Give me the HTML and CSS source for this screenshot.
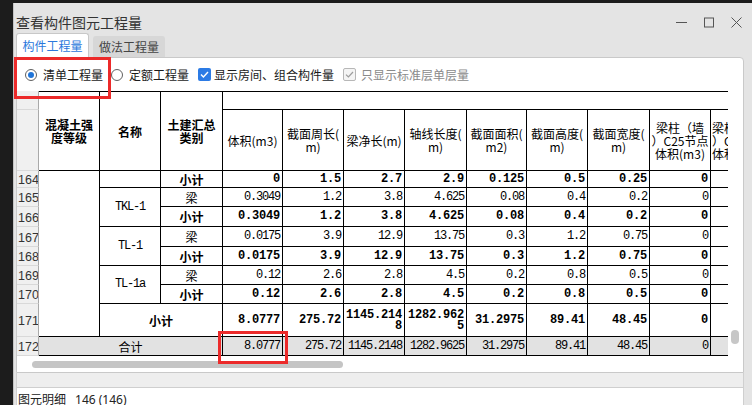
FILE: index.html
```html
<!DOCTYPE html>
<html lang="zh-CN">
<head>
<meta charset="utf-8">
<title>查看构件图元工程量</title>
<link rel="stylesheet" href="styles.css">
</head>
<body>
<div class="dialog">
  <div class="titlebar">
    <div class="title">查看构件图元工程量</div>
    <div class="winctl">
      <svg class="mn" width="11" height="11" viewBox="0 0 11 11"><path d="M0 5.5H11" stroke="#555" stroke-width="1"/></svg>
      <svg class="mx" width="10" height="11" viewBox="0 0 10 11"><rect x="0.5" y="1" width="9" height="9" fill="none" stroke="#555" stroke-width="1"/></svg>
      <svg class="cl" width="11" height="11" viewBox="0 0 11 11"><path d="M0.5 0.5L10.5 10.5M10.5 0.5L0.5 10.5" stroke="#555" stroke-width="1"/></svg>
    </div>
  </div>
  <div class="tabs">
    <div class="tab active">构件工程量</div>
    <div class="tab">做法工程量</div>
  </div>
  <div class="panel">
    <div class="options">
      <span class="radio on"></span><span class="lbl lbl1">清单工程量</span>
      <span class="radio"></span><span class="lbl lbl2">定额工程量</span>
      <span class="cb"><svg width="11" height="11" viewBox="0 0 11 11"><path d="M2 5.6L4.4 8L9 3" fill="none" stroke="#fff" stroke-width="1.4"/></svg></span><span class="lbl lbl3">显示房间、组合构件量</span>
      <span class="cb dis"><svg width="11" height="11" viewBox="0 0 11 11"><path d="M2 5.6L4.4 8L9 3" fill="none" stroke="#9c9c9c" stroke-width="1.2"/></svg></span><span class="lbl dis-lbl">只显示标准层单层量</span>
    </div>
    <div class="pbody">
      <div class="tablearea">
        <div class="grid-wrap">
          <div class="grid">
            <!-- header row 1 -->
            <div class="rh"></div>
            <div class="c ml top hb r2"><span>混凝土强</span><span>度等级</span></div>
            <div class="c top hb r2">名称</div>
            <div class="c ml top hb r2"><span>土建汇总</span><span>类别</span></div>
            <div class="c top span9"></div>
            <!-- header row 2 -->
            <div class="rh"></div>
            <div class="c">体积(m3)</div>
            <div class="c ml"><span>截面周长(</span><span>m)</span></div>
            <div class="c">梁净长(m)</div>
            <div class="c ml"><span>轴线长度(</span><span>m)</span></div>
            <div class="c ml"><span>截面面积(</span><span>m2)</span></div>
            <div class="c ml"><span>截面高度(</span><span>m)</span></div>
            <div class="c ml"><span>截面宽度(</span><span>m)</span></div>
            <div class="c ml"><span>梁柱（墙</span><span>）C25节点</span><span>体积(m3)</span></div>
            <div class="c ml lastcol"><span>梁柱（墙</span><span>）C30节点</span><span>体积(m3)</span></div>
            <!-- 164 -->
            <div class="rh">164</div>
            <div class="c r8"></div>
            <div class="c nm clipnm"><span>LL-1 TL-1</span></div>
            <div class="c b">小计</div>
            <div class="c num b">0</div><div class="c num b">1.5</div><div class="c num b">2.7</div><div class="c num b">2.9</div><div class="c num b">0.125</div><div class="c num b">0.5</div><div class="c num b">0.25</div><div class="c num b">0</div>
            <div class="c"></div>
            <!-- 165 -->
            <div class="rh">165</div>
            <div class="c nm r2">TKL-1</div>
            <div class="c">梁</div>
            <div class="c num">0.3049</div><div class="c num">1.2</div><div class="c num">3.8</div><div class="c num">4.625</div><div class="c num">0.08</div><div class="c num">0.4</div><div class="c num">0.2</div><div class="c num">0</div>
            <div class="c"></div>
            <!-- 166 -->
            <div class="rh">166</div>
            <div class="c b">小计</div>
            <div class="c num b">0.3049</div><div class="c num b">1.2</div><div class="c num b">3.8</div><div class="c num b">4.625</div><div class="c num b">0.08</div><div class="c num b">0.4</div><div class="c num b">0.2</div><div class="c num b">0</div>
            <div class="c"></div>
            <!-- 167 -->
            <div class="rh">167</div>
            <div class="c nm r2">TL-1</div>
            <div class="c">梁</div>
            <div class="c num">0.0175</div><div class="c num">3.9</div><div class="c num">12.9</div><div class="c num">13.75</div><div class="c num">0.3</div><div class="c num">1.2</div><div class="c num">0.75</div><div class="c num">0</div>
            <div class="c"></div>
            <!-- 168 -->
            <div class="rh">168</div>
            <div class="c b">小计</div>
            <div class="c num b">0.0175</div><div class="c num b">3.9</div><div class="c num b">12.9</div><div class="c num b">13.75</div><div class="c num b">0.3</div><div class="c num b">1.2</div><div class="c num b">0.75</div><div class="c num b">0</div>
            <div class="c"></div>
            <!-- 169 -->
            <div class="rh">169</div>
            <div class="c nm r2">TL-1a</div>
            <div class="c">梁</div>
            <div class="c num">0.12</div><div class="c num">2.6</div><div class="c num">2.8</div><div class="c num">4.5</div><div class="c num">0.2</div><div class="c num">0.8</div><div class="c num">0.5</div><div class="c num">0</div>
            <div class="c"></div>
            <!-- 170 -->
            <div class="rh">170</div>
            <div class="c b">小计</div>
            <div class="c num b">0.12</div><div class="c num b">2.6</div><div class="c num b">2.8</div><div class="c num b">4.5</div><div class="c num b">0.2</div><div class="c num b">0.8</div><div class="c num b">0.5</div><div class="c num b">0</div>
            <div class="c"></div>
            <!-- 171 -->
            <div class="rh">171</div>
            <div class="c b span2">小计</div>
            <div class="c num b">8.0777</div><div class="c num b">275.72</div><div class="c num b ml wrap"><span>1145.214</span><span>8</span></div><div class="c num b ml wrap"><span>1282.962</span><span>5</span></div><div class="c num b">31.2975</div><div class="c num b">89.41</div><div class="c num b">48.45</div><div class="c num b">0</div>
            <div class="c"></div>
            <!-- 172 -->
            <div class="rh">172</div>
            <div class="c tot span3">合计</div>
            <div class="c num tot">8.0777</div><div class="c num tot">275.72</div><div class="c num tot">1145.2148</div><div class="c num tot">1282.9625</div><div class="c num tot">31.2975</div><div class="c num tot">89.41</div><div class="c num tot">48.45</div><div class="c num tot">0</div>
            <div class="c tot"></div>
          </div>
        </div>
        <div class="hscroll"><div class="hthumb"></div></div>
      </div>
      <div class="vscroll"><div class="vthumb"></div></div>
    </div>
  </div>
  <div class="band"></div>
  <div class="status"><span>图元明细</span><span class="cnt">146 (146)</span></div>
</div>
<div class="hl hl1"></div>
<div class="hl hl2"></div>
</body>
</html>
```
FILE: styles.css
```css
* { box-sizing: border-box; }
html, body { margin: 0; padding: 0; }
body {
  position: relative;
  width: 752px;
  height: 405px;
  overflow: hidden;
  background: #1c1c1c;
  font-family: "Noto Sans CJK SC", "Noto Sans", sans-serif;
  color: #222;
}
.dialog {
  margin: 3px 0 0 13px;
  height: 402px;
  background: #e4e4e4;
  border-left: 1px solid #c4c4c4;
  padding-left: 2px;
  display: flex;
  flex-direction: column;
}
.titlebar {
  height: 30px;
  padding-top: 8px;
  display: flex;
  align-items: center;
  flex-shrink: 0;
}
.title {
  font-size: 14px;
  line-height: 20px;
  color: #333;
}
.winctl {
  margin-left: auto;
  padding-right: 10px;
  display: flex;
  align-items: center;
}
.winctl svg { display: block; }
.winctl .mn { margin-right: 17px; }
.winctl .mx { margin-right: 17px; }
.tabs {
  height: 24px;
  display: flex;
  align-items: flex-end;
  flex-shrink: 0;
}
.tab {
  width: 72px;
  height: 21px;
  margin-left: 4px;
  background: #d7d7d7;
  border-radius: 3px 3px 0 0;
  font-size: 12px;
  line-height: 21px;
  text-align: center;
  color: #444;
}
.tab.active {
  position: relative;
  z-index: 2;
  width: 73px;
  height: 25px;
  margin-left: 0;
  margin-bottom: -1px;
  background: #fff;
  border: 1px solid #c8c8c8;
  border-bottom: none;
  color: #2b78dc;
  line-height: 23px;
}
.panel {
  position: relative;
  z-index: 1;
  width: 728px;
  height: 316px;
  flex-shrink: 0;
  background: #fff;
  border: 1px solid #c9c9c9;
  border-radius: 0 4px 0 0;
  display: flex;
  flex-direction: column;
}
.options {
  height: 33px;
  padding-left: 8px;
  display: flex;
  align-items: center;
  font-size: 12px;
  color: #1a1a1a;
  flex-shrink: 0;
}
.radio {
  width: 12px;
  height: 12px;
  border: 1px solid #606060;
  border-radius: 50%;
  margin-right: 6px;
  display: flex;
  align-items: center;
  justify-content: center;
  background: #fff;
}
.radio.on::after {
  content: "";
  width: 6px;
  height: 6px;
  border-radius: 50%;
  background: #1f74d8;
}
.lbl { line-height: 16px; white-space: nowrap; }
.lbl1 { margin-right: 8px; }
.lbl2 { margin-right: 9px; }
.lbl3 { margin-right: 9px; }
.cb {
  width: 13px;
  height: 13px;
  border-radius: 2px;
  background: #2c7be5;
  margin-right: 3px;
  display: flex;
  align-items: center;
  justify-content: center;
}
.cb svg { display: block; }
.cb.dis {
  background: #f4f4f4;
  border: 1px solid #b7b7b7;
  margin-right: 5px;
}
.dis-lbl { color: #8a8a8a; }
.pbody {
  display: flex;
  height: 281px;
}
.tablearea { width: 711px; }
.grid-wrap {
  width: 711px;
  height: 265px;
  overflow: hidden;
}
.grid {
  display: grid;
  width: max-content;
  grid-template-columns: 22px 61px 61px 62px 60px 61px 61px 62px 60px 61px 62px 61px 61px;
  grid-template-rows: 19px 61px 17px 19px 20px 20px 19px 19px 19px 33px 19px;
  font-size: 12px;
  color: #000;
}
.rh {
  background: #f0f0f0;
  border-right: 1px solid #a9a9a9;
  border-bottom: 1px solid #d9d9d9;
  font-family: "Liberation Sans", sans-serif;
  font-size: 12.5px;
  color: #333;
  display: flex;
  align-items: center;
  padding-left: 1px;
  padding-top: 2px;
  overflow: hidden;
}
.c {
  border-right: 1px solid #000;
  border-bottom: 1px solid #000;
  display: flex;
  align-items: center;
  justify-content: center;
  overflow: hidden;
  line-height: 13px;
  white-space: nowrap;
}
.c.ml {
  flex-direction: column;
  justify-content: center;
  align-items: center;
}
.c.ml > span { display: block; height: 13px; }
.top { border-top: 1px solid #000; }
.hb { font-weight: bold; }
.c.lastcol { align-items: flex-start; padding-left: 1px; }
.r2 { grid-row: span 2; }
.r8 { grid-row: span 8; }
.span2 { grid-column: span 2; }
.span3 { grid-column: span 3; }
.span9 { grid-column: span 9; }
.b { font-weight: bold; }
.num {
  justify-content: flex-end;
  padding-right: 2px;
  font-family: "Liberation Mono", monospace;
  font-size: 12px;
  letter-spacing: -1.2px;
}
.num.b { letter-spacing: -0.2px; }
.c.num.ml { align-items: flex-end; padding-top: 1px; }
.c.num.ml > span { height: 11px; line-height: 11px; }
.nm {
  font-family: "Liberation Mono", monospace;
  font-size: 12px;
  letter-spacing: -1.2px;
}
.clipnm { align-items: flex-start; }
.clipnm > span { margin-top: -10px; }
.tot { background: #e2e2e2; }
.hscroll { height: 16px; padding-top: 5px; padding-left: 15px; }
.hthumb {
  width: 311px;
  height: 7px;
  border-radius: 4px;
  background: #c5c5c5;
}
.vscroll { width: 15px; }
.vthumb {
  margin-top: 239px;
  margin-left: 3px;
  width: 8px;
  height: 14px;
  border-radius: 4px;
  background: #c7c7c7;
}
.band {
  width: 728px;
  height: 14px;
  background: #eeeeee;
  border-left: 1px solid #d0d0d0;
  border-right: 1px solid #d0d0d0;
  flex-shrink: 0;
}
.status {
  width: 728px;
  flex: 1;
  background: #fff;
  border: 1px solid #cfcfcf;
  border-bottom: none;
  padding: 2px 0 0 1px;
  font-size: 12px;
  line-height: 17px;
  color: #222;
  white-space: nowrap;
}
.status .cnt { margin-left: 9px; font-family: "Noto Sans", sans-serif; }
.hl {
  position: absolute;
  z-index: 5;
  border: 3px solid #ec2a2a;
}
.hl1 { left: 14px; top: 57px; width: 97px; height: 42px; }
.hl2 { left: 218px; top: 331px; width: 70px; height: 33px; }
```
